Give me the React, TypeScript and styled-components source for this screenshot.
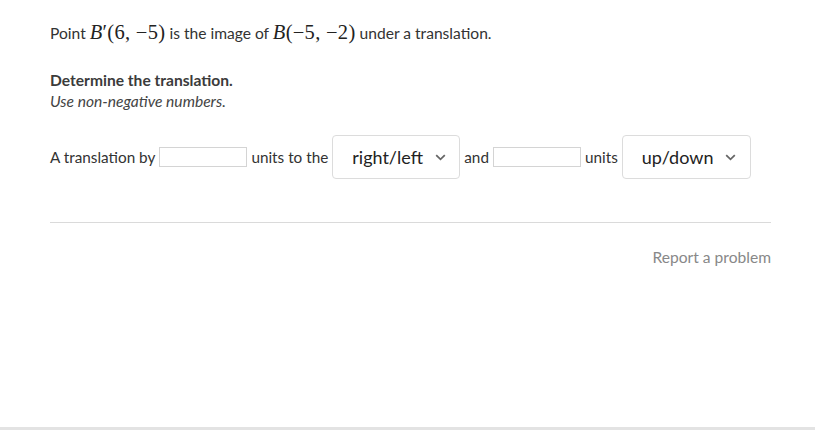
import styled, { createGlobalStyle } from 'styled-components';

const GlobalStyle = createGlobalStyle`
  html, body {
    margin: 0;
    padding: 0;
    background: #fff;
  }
  body {
    font-family: Lato, "Open Sans", sans-serif;
    color: #333;
  }
`;

const Page = styled.div`
  box-sizing: border-box;
  height: 430px;
  padding: 18px 44px 0 50px;
  border-bottom: 3px solid #e3e3e3;
  display: flex;
  flex-direction: column;
`;

const Prompt = styled.p`
  margin: 0;
  font-size: 15.6px;
  line-height: 28px;
  color: #333;
`;

const Math = styled.span`
  font-family: "Liberation Serif", "DejaVu Serif", serif;
  font-size: 20.5px;
  color: #222;
  letter-spacing: 0.3px;
`;

const Var = styled.i`
  font-style: italic;
`;

const Instructions = styled.div`
  margin-top: 24px;
  display: flex;
  flex-direction: column;
  gap: 2px;
  font-size: 15.6px;
  line-height: 19px;
`;

const Heading = styled.div`
  font-weight: 700;
  color: #3b3b3b;
`;

const Hint = styled.div`
  font-style: italic;
  color: #444;
`;

const AnswerRow = styled.div`
  margin-top: 24px;
  display: flex;
  align-items: center;
  gap: 4px;
  font-size: 15.3px;
  color: #333;
`;

const NumberInput = styled.input`
  box-sizing: border-box;
  width: 88px;
  height: 20px;
  margin: 0;
  padding: 0 4px;
  border: 1px solid #d4d4d4;
  border-radius: 0;
  font-family: inherit;
  font-size: 15px;
  outline: none;
`;

const Select = styled.div<{ $width: number }>`
  box-sizing: border-box;
  width: ${p => p.$width}px;
  height: 44px;
  padding: 0 0 0 19px;
  border: 1px solid #dcdcdc;
  border-radius: 4px;
  display: flex;
  align-items: center;
  gap: 12px;
  font-size: 18px;
  color: #222;
`;

const Chevron = () => (
  <svg width="11" height="7" viewBox="0 0 11 7" fill="none">
    <path d="M1.2 1.2 5.5 5.3 9.8 1.2" stroke="#666" strokeWidth="1.8" />
  </svg>
);

const Divider = styled.hr`
  margin: 43px 0 0;
  border: 0;
  border-top: 1px solid #dadada;
`;

const Report = styled.a`
  align-self: flex-end;
  margin-top: 25px;
  font-size: 15.6px;
  color: #888;
  text-decoration: none;
`;

export default function App() {
  return (
    <>
      <GlobalStyle />
      <Page>
        <Prompt>
          Point{' '}
          <Math>
            <Var>B</Var>′(6, −5)
          </Math>{' '}
          is the image of{' '}
          <Math>
            <Var>B</Var>(−5, −2)
          </Math>{' '}
          under a translation.
        </Prompt>

        <Instructions>
          <Heading>Determine the translation.</Heading>
          <Hint>Use non-negative numbers.</Hint>
        </Instructions>

        <AnswerRow>
          <span>A translation by</span>
          <NumberInput aria-label="horizontal units" />
          <span>units to the</span>
          <Select $width={128}>
            right/left
            <Chevron />
          </Select>
          <span>and</span>
          <NumberInput aria-label="vertical units" />
          <span>units</span>
          <Select $width={129}>
            up/down
            <Chevron />
          </Select>
        </AnswerRow>

        <Divider />
        <Report href="#">Report a problem</Report>
      </Page>
    </>
  );
}
